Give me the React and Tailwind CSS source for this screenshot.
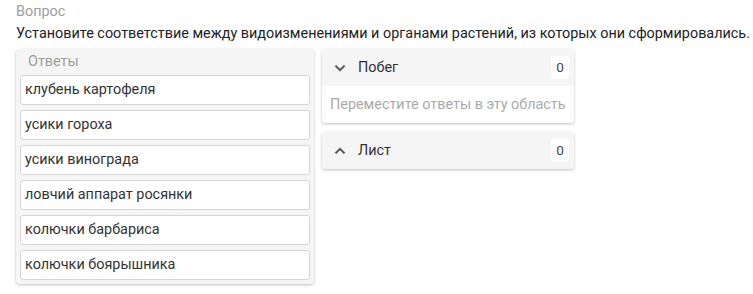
const answers = [
  "клубень картофеля",
  "усики гороха",
  "усики винограда",
  "ловчий аппарат росянки",
  "колючки барбариса",
  "колючки боярышника",
];

function Chevron({ up }) {
  return (
    <svg width="20" height="20" viewBox="0 0 24 24" className="text-[#555] -ml-[3px]">
      <path
        d={up ? "M7.41 15.41 12 10.83l4.59 4.58L18 14l-6-6-6 6z" : "M7.41 8.59 12 13.17l4.59-4.58L18 10l-6 6-6-6z"}
        fill="currentColor"
        stroke="currentColor"
        strokeWidth="0.6"
      />
    </svg>
  );
}

function Category({ title, open }) {
  return (
    <div className="rounded bg-white shadow-[0_1px_3px_rgba(0,0,0,0.25)] overflow-hidden">
      <div className="flex items-center h-[37px] bg-[#f5f5f5] pl-[11px] pr-[5px]">
        <Chevron up={!open} />
        <span className="ml-[8px] text-[14.4px] text-[#333]">{title}</span>
        <span className="ml-auto w-[18px] h-[23px] bg-white rounded-sm flex items-center justify-center text-[13.5px] text-[#444]">
          0
        </span>
      </div>
      {open && (
        <div className="h-[37px] flex items-center px-[8px] text-[14.4px] text-[#aaa]">
          Переместите ответы в эту область
        </div>
      )}
    </div>
  );
}

export default function App() {
  return (
    <div className="w-[753px] h-[294px] bg-white px-[16px] pt-[3px] font-['Roboto',sans-serif]">
      <div className="text-[14.4px] leading-[18px] text-[#9e9e9e]">Вопрос</div>
      <div className="text-[14.4px] leading-[20px] mt-[3px] text-[#222] whitespace-nowrap">
        Установите соответствие между видоизменениями и органами растений, из которых они сформировались.
      </div>
      <div className="flex gap-[8px] mt-[5px] items-start">
        <div className="w-[298px] rounded bg-[#f5f5f5] shadow-[0_1px_3px_rgba(0,0,0,0.25)] px-[4px] pb-[4px]">
          <div className="h-[26px] flex items-center pl-[8px] text-[14.4px] text-[#9e9e9e]">Ответы</div>
          <div className="flex flex-col gap-[5px]">
            {answers.map((a) => (
              <div
                key={a}
                className="h-[30px] bg-white border border-[#d6d6d6] rounded-[3px] flex items-center pl-[4px] text-[14.4px] text-[#333]"
              >
                {a}
              </div>
            ))}
          </div>
        </div>
        <div className="w-[252px] flex flex-col gap-[9px]">
          <Category title="Побег" open />
          <Category title="Лист" />
        </div>
      </div>
    </div>
  );
}
